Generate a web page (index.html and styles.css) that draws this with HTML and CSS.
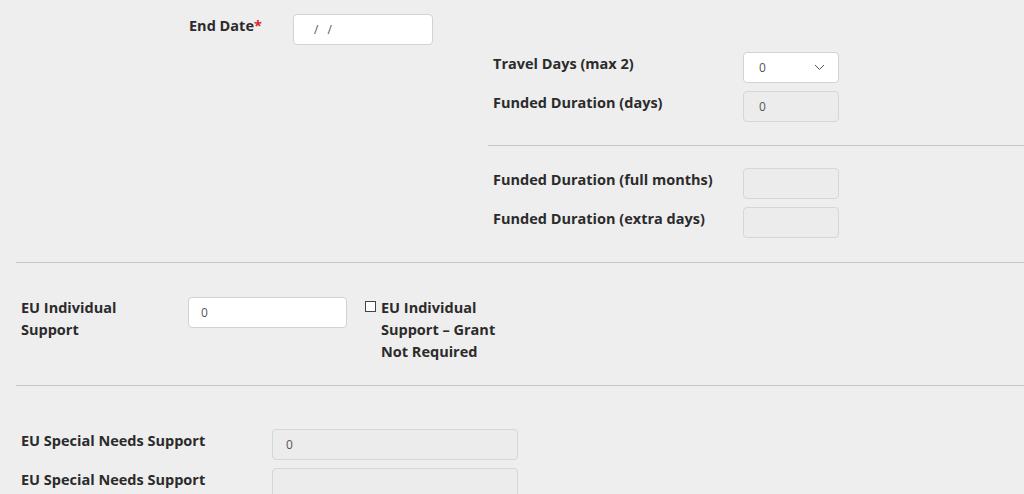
FILE: index.html
```html
<!DOCTYPE html>
<html>
<head>
<meta charset="utf-8">
<link rel="stylesheet" href="styles.css">
</head>
<body>
<div class="page">
  <section class="top">
    <div class="end-row">
      <label class="lbl end-lbl">End Date<span class="req">*</span></label>
      <div class="field end-field"><span class="val date">/ /</span></div>
    </div>
    <div class="right">
      <div class="group">
        <div class="rrow">
          <label class="lbl rlbl">Travel Days (max 2)</label>
          <div class="field rfield select"><span class="val">0</span>
            <svg class="chev" width="11" height="7" viewBox="0 0 11 7"><path d="M1 1 L5.5 5.5 L10 1" fill="none" stroke="#555" stroke-width="1"/></svg>
          </div>
        </div>
        <div class="rrow">
          <label class="lbl rlbl">Funded Duration (days)</label>
          <div class="field rfield disabled"><span class="val">0</span></div>
        </div>
      </div>
      <hr class="rule short">
      <div class="group">
        <div class="rrow">
          <label class="lbl rlbl">Funded Duration (full months)</label>
          <div class="field rfield disabled"></div>
        </div>
        <div class="rrow">
          <label class="lbl rlbl">Funded Duration (extra days)</label>
          <div class="field rfield disabled"></div>
        </div>
      </div>
    </div>
  </section>
  <hr class="rule first">
  <section class="indiv">
    <label class="lbl indiv-lbl">EU Individual Support</label>
    <div class="field indiv-field"><span class="val">0</span></div>
    <div class="check">
      <span class="box"></span>
      <span class="lbl check-lbl">EU Individual Support – Grant Not Required</span>
    </div>
  </section>
  <hr class="rule second">
  <section class="special">
    <div class="srow">
      <label class="lbl slbl">EU Special Needs Support</label>
      <div class="field sfield disabled"><span class="val">0</span></div>
    </div>
    <div class="srow">
      <label class="lbl slbl">EU Special Needs Support</label>
      <div class="field sfield disabled"></div>
    </div>
  </section>
</div>
</body>
</html>
```
FILE: styles.css
```css
html, body {
  margin: 0;
  padding: 0;
  background: #eeeeee;
  font-family: "Open Sans", "DejaVu Sans", sans-serif;
  color: #333;
  overflow: hidden;
}
.page {
  width: 1024px;
  height: 494px;
}
.lbl {
  font-weight: 700;
  font-size: 14.5px;
  line-height: 22px;
  color: #2b2b2b;
  padding-top: 1px;
}
.req { color: #d9232e; }
.field {
  box-sizing: border-box;
  height: 31px;
  background: #fff;
  border: 1px solid #d2d2d2;
  border-radius: 4px;
  display: flex;
  align-items: center;
  padding-left: 15px;
  font-size: 12px;
  color: #555;
}
.field.disabled {
  background: #ececec;
  border-color: #d6d6d6;
}
.val { line-height: 1; }
.top {
  padding-top: 14px;
}
.end-row {
  display: flex;
  margin-left: 189px;
}
.end-lbl { width: 104px; }
.end-field { width: 140px; padding-left: 20px; }
.date { letter-spacing: 3px; }
.right {
  margin-left: 488px;
  margin-top: 7px;
}
.group {
  display: flex;
  flex-direction: column;
  gap: 8px;
}
.rrow {
  display: flex;
  padding-left: 5px;
}
.rlbl { width: 250px; }
.rfield { width: 96px; }
.select { justify-content: space-between; padding-right: 13px; }
.chev { display: block; }
.rule {
  border: 0;
  border-top: 1px solid #c6c6c6;
  margin: 23px 0 23px 16px;
  height: 0;
}
.rule.first { margin-top: 24px; }
.rule.second { margin-top: 22px; }
.rule.short {
  margin: 23px 0 22px 0;
}
.indiv {
  display: flex;
  align-items: flex-start;
  padding-left: 21px;
  padding-top: 11px;
}
.indiv-lbl { width: 167px; padding-right: 40px; box-sizing: border-box; margin-top: -1px; }
.indiv-field { width: 159px; padding-left: 12px; }
.check {
  display: flex;
  align-items: flex-start;
  margin-left: 18px;
}
.box {
  width: 11px;
  height: 11px;
  box-sizing: border-box;
  border: 1px solid #444;
  background: #fff;
  margin-top: 4px;
  margin-right: 5px;
  flex: none;
}
.check-lbl { width: 125px; margin-top: -1px; }
.special {
  padding-left: 21px;
  padding-top: 20px;
  display: flex;
  flex-direction: column;
  gap: 8px;
}
.srow { display: flex; }
.slbl { width: 251px; }
.sfield { width: 246px; padding-left: 13px; }
```
